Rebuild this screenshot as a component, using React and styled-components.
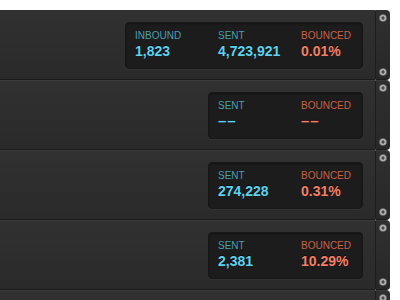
import React from "react";
import styled, { createGlobalStyle } from "styled-components";

const GlobalStyle = createGlobalStyle`
  html, body {
    margin: 0;
    padding: 0;
    background: #ffffff;
    overflow: hidden;
  }
  body {
    font-family: "Liberation Sans", Arial, sans-serif;
  }
`;

const Rack = styled.div`
  width: 390px;
  padding-top: 10px;
`;

const Row = styled.div`
  display: flex;
  height: 70px;
`;

const Panel = styled.div`
  flex: 1;
  box-sizing: border-box;
  display: flex;
  align-items: center;
  justify-content: flex-end;
  padding-right: 12px;
  background: linear-gradient(#313131, #2a2a2a);
  border-top: 1px solid ${(p) => (p.$first ? "#303030" : "#3a3a3a")};
  border-bottom: 1px solid #1b1b1b;
`;

const Rail = styled.div`
  width: 15px;
  box-sizing: border-box;
  display: flex;
  flex-direction: column;
  justify-content: space-between;
  align-items: center;
  padding: 3px 0;
  background: linear-gradient(#2f2f2f, #282828);
  border-left: 1px solid #1d1d1d;
  border-top: 1px solid ${(p) => (p.$first ? "#303030" : "#3a3a3a")};
  border-bottom: 1px solid #1b1b1b;
  border-radius: 0 4px 4px 0;
`;

const StatBox = styled.div`
  display: flex;
  padding: 7px 11px 9px 9px;
  background: #1c1c1c;
  border: 1px solid #171717;
  border-radius: 4px;
  box-shadow: 0 1px 0 rgba(255, 255, 255, 0.04),
    inset 0 1px 2px rgba(0, 0, 0, 0.35);
`;

const Stat = styled.div`
  display: flex;
  flex-direction: column;
  gap: 1px;
  width: 83px;

  &:last-child {
    width: auto;
  }
`;

const Label = styled.div`
  font-size: 10px;
  line-height: 12px;
  color: ${(p) => (p.$bad ? "#c9614b" : "#4a9fb2")};
  text-transform: uppercase;
  white-space: nowrap;
`;

const Value = styled.div`
  font-size: ${(p) => (p.$empty ? "15px" : "14px")};
  line-height: 16px;
  font-weight: bold;
  color: ${(p) => (p.$bad ? "#f47f66" : "#5ed2ee")};
  text-shadow: 0 -1px 0 rgba(0, 0, 0, 0.6);
  white-space: nowrap;
  letter-spacing: ${(p) => (p.$empty ? "1px" : "0")};
`;

const Screw = () => (
  <svg width="8" height="8" viewBox="0 0 8 8">
    <circle cx="4" cy="4" r="3.6" fill="#b4b4b4" stroke="#5a5a5a" strokeWidth="0.6" />
    <path d="M4 2.3V5.7M2.3 4H5.7" stroke="#2a2a2a" strokeWidth="1.1" />
  </svg>
);

const rows = [
  [
    { label: "Inbound", value: "1,823" },
    { label: "Sent", value: "4,723,921" },
    { label: "Bounced", value: "0.01%", bad: true },
  ],
  [
    { label: "Sent", value: "––", empty: true },
    { label: "Bounced", value: "––", bad: true, empty: true },
  ],
  [
    { label: "Sent", value: "274,228" },
    { label: "Bounced", value: "0.31%", bad: true },
  ],
  [
    { label: "Sent", value: "2,381" },
    { label: "Bounced", value: "10.29%", bad: true },
  ],
  null,
];

export default function App() {
  return (
    <>
      <GlobalStyle />
      <Rack>
        {rows.map((stats, i) => (
          <Row key={i}>
            <Panel $first={i === 0}>
              {stats && (
                <StatBox>
                  {stats.map((s) => (
                    <Stat key={s.label}>
                      <Label $bad={s.bad}>{s.label}</Label>
                      <Value $bad={s.bad} $empty={s.empty}>
                        {s.value}
                      </Value>
                    </Stat>
                  ))}
                </StatBox>
              )}
            </Panel>
            <Rail $first={i === 0}>
              <Screw />
              <Screw />
            </Rail>
          </Row>
        ))}
      </Rack>
    </>
  );
}
